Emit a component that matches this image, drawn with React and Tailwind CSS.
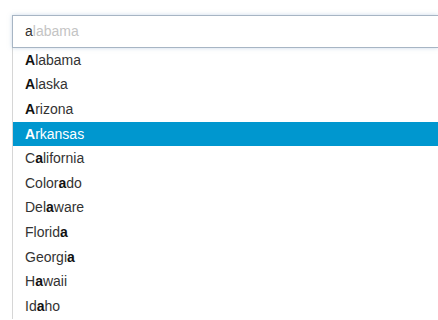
import React from "react";

const items = [
  ["", "A", "labama"],
  ["", "A", "laska"],
  ["", "A", "rizona"],
  ["", "A", "rkansas"],
  ["C", "a", "lifornia"],
  ["Color", "a", "do"],
  ["Del", "a", "ware"],
  ["Florid", "a", ""],
  ["Georgi", "a", ""],
  ["H", "a", "waii"],
  ["Id", "a", "ho"],
];

export default function App() {
  return (
    <div
      className="w-[438px] h-[320px] overflow-hidden bg-white pt-[15px] pl-[12px]"
      style={{ fontFamily: '"Liberation Sans", Arial, sans-serif' }}
    >
      <div className="w-full flex flex-col">
        <div className="h-[33px] border border-r-0 border-[#a7b5c4] shadow-[0_0_4px_rgba(150,180,210,0.5)] bg-white flex items-center pl-[12px] text-[14px] relative z-10">
          <span className="text-[#333]">a</span>
          <span className="text-[#c4c4c4]">labama</span>
        </div>
        <div className="-mt-px border-l border-t border-[#d6d6d6] bg-white">
          {items.map(([pre, b, post], i) => {
            const active = i === 3;
            return (
              <div
                key={i}
                className={
                  "h-[24.6px] flex items-center pl-[12px] text-[14px] " +
                  (active ? "bg-[#0097cf] text-white" : "text-[#333]")
                }
              >
                <span>{pre}</span>
                <span className={active ? "font-bold text-white" : "font-bold text-[#111]"}>{b}</span>
                <span>{post}</span>
              </div>
            );
          })}
        </div>
      </div>
    </div>
  );
}
